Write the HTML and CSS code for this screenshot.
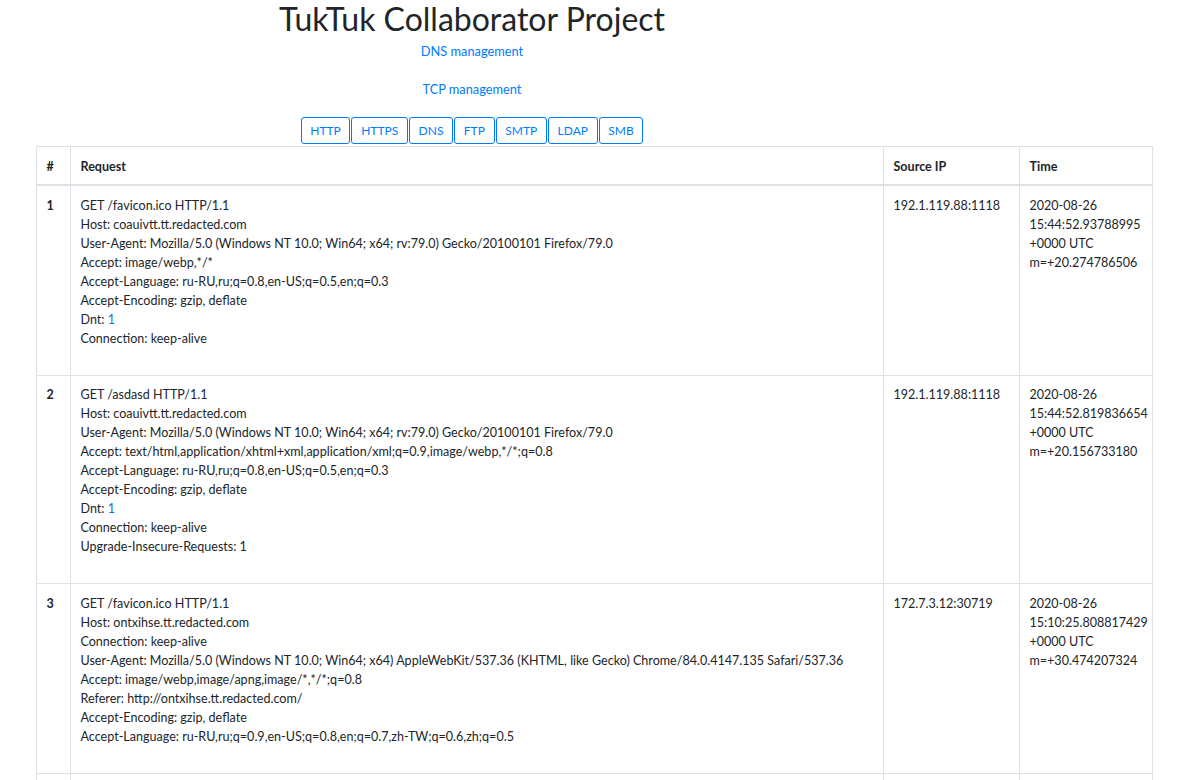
FILE: index.html
```html
<!DOCTYPE html>
<html lang="en">
<head>
<meta charset="utf-8">
<title>TukTuk Collaborator Project</title>
<link rel="stylesheet" href="styles.css">
</head>
<body>
<header class="header">
  <h1 class="title">TukTuk Collaborator Project</h1>
  <p class="nav-link-row dns"><a href="#" class="link">DNS management</a></p>
  <p class="nav-link-row tcp"><a href="#" class="link">TCP management</a></p>
  <div class="btn-group">
    <button class="btn">HTTP</button>
    <button class="btn">HTTPS</button>
    <button class="btn">DNS</button>
    <button class="btn">FTP</button>
    <button class="btn">SMTP</button>
    <button class="btn">LDAP</button>
    <button class="btn">SMB</button>
  </div>
</header>
<table class="table">
  <colgroup>
    <col class="c-num"><col class="c-req"><col class="c-ip"><col class="c-time">
  </colgroup>
  <thead>
    <tr><th>#</th><th>Request</th><th>Source IP</th><th>Time</th></tr>
  </thead>
  <tbody>
    <tr>
      <td class="num">1</td>
      <td class="req">GET /favicon.ico HTTP/1.1<br>Host: coauivtt.tt.redacted.com<br>User-Agent: Mozilla/5.0 (Windows NT 10.0; Win64; x64; rv:79.0) Gecko/20100101 Firefox/79.0<br>Accept: image/webp,*/*<br>Accept-Language: ru-RU,ru;q=0.8,en-US;q=0.5,en;q=0.3<br>Accept-Encoding: gzip, deflate<br>Dnt: <span class="blue">1</span><br>Connection: keep-alive</td>
      <td>192.1.119.88:1118</td>
      <td>2020-08-26<br>15:44:52.93788995<br>+0000 UTC<br>m=+20.274786506</td>
    </tr>
    <tr>
      <td class="num">2</td>
      <td class="req">GET /asdasd HTTP/1.1<br>Host: coauivtt.tt.redacted.com<br>User-Agent: Mozilla/5.0 (Windows NT 10.0; Win64; x64; rv:79.0) Gecko/20100101 Firefox/79.0<br>Accept: text/html,application/xhtml+xml,application/xml;q=0.9,image/webp,*/*;q=0.8<br>Accept-Language: ru-RU,ru;q=0.8,en-US;q=0.5,en;q=0.3<br>Accept-Encoding: gzip, deflate<br>Dnt: <span class="blue">1</span><br>Connection: keep-alive<br>Upgrade-Insecure-Requests: 1</td>
      <td>192.1.119.88:1118</td>
      <td>2020-08-26<br>15:44:52.819836654<br>+0000 UTC<br>m=+20.156733180</td>
    </tr>
    <tr>
      <td class="num">3</td>
      <td class="req">GET /favicon.ico HTTP/1.1<br>Host: ontxihse.tt.redacted.com<br>Connection: keep-alive<br>User-Agent: Mozilla/5.0 (Windows NT 10.0; Win64; x64) AppleWebKit/537.36 (KHTML, like Gecko) Chrome/84.0.4147.135 Safari/537.36<br>Accept: image/webp,image/apng,image/*,*/*;q=0.8<br>Referer: http://ontxihse.tt.redacted.com/<br>Accept-Encoding: gzip, deflate<br>Accept-Language: ru-RU,ru;q=0.9,en-US;q=0.8,en;q=0.7,zh-TW;q=0.6,zh;q=0.5</td>
      <td>172.7.3.12:30719</td>
      <td>2020-08-26<br>15:10:25.808817429<br>+0000 UTC<br>m=+30.474207324</td>
    </tr>
    <tr class="row-next">
      <td></td>
      <td></td>
      <td></td>
      <td></td>
    </tr>
  </tbody>
</table>
</body>
</html>
```
FILE: styles.css
```css
html, body {
  margin: 0;
  padding: 0;
  background: #ffffff;
}
body {
  font-family: Lato, "Noto Sans", sans-serif;
  font-size: 12.55px;
  line-height: 19px;
  color: #212529;
}
.header {
  width: 944px;
  text-align: center;
}
.title {
  margin: 0;
  font-size: 32px;
  line-height: 38px;
  font-weight: 400;
  color: #212529;
}
.nav-link-row {
  margin: 0;
  font-size: 12.8px;
}
.nav-link-row.dns {
  padding-top: 4px;
}
.nav-link-row.tcp {
  padding-top: 19px;
}
.link {
  color: #007bff;
  text-decoration: none;
}
.btn-group {
  display: flex;
  justify-content: center;
  gap: 1px;
  margin-top: 18px;
}
.btn {
  display: inline-block;
  box-sizing: border-box;
  height: 27px;
  font-family: inherit;
  font-size: 12px;
  line-height: 25px;
  padding: 0 8.7px;
  border: 1px solid #007bff;
  border-radius: 3px;
  background: #ffffff;
  color: #007bff;
  margin: 0;
}
.table {
  margin-left: 36px;
  margin-top: 2px;
  width: 1116px;
  border-collapse: collapse;
  table-layout: fixed;
  border: 1px solid #dee2e6;
}
.c-num { width: 34px; }
.c-req { width: 813px; }
.c-ip { width: 136px; }
.c-time { width: 133px; }
.table th,
.table td {
  border: 1px solid #dee2e6;
  padding: 9.5px 9.5px;
  text-align: left;
  vertical-align: top;
}
.table th {
  font-weight: 700;
  vertical-align: bottom;
  border-bottom-width: 2px;
  padding-top: 9.5px;
  padding-bottom: 8.5px;
}
.table td.num {
  font-weight: 700;
}
.table td.req {
  padding-bottom: 27px;
  white-space: nowrap;
}
.row-next td {
  height: 120px;
}
.blue {
  color: #1b6fd6;
}
```
